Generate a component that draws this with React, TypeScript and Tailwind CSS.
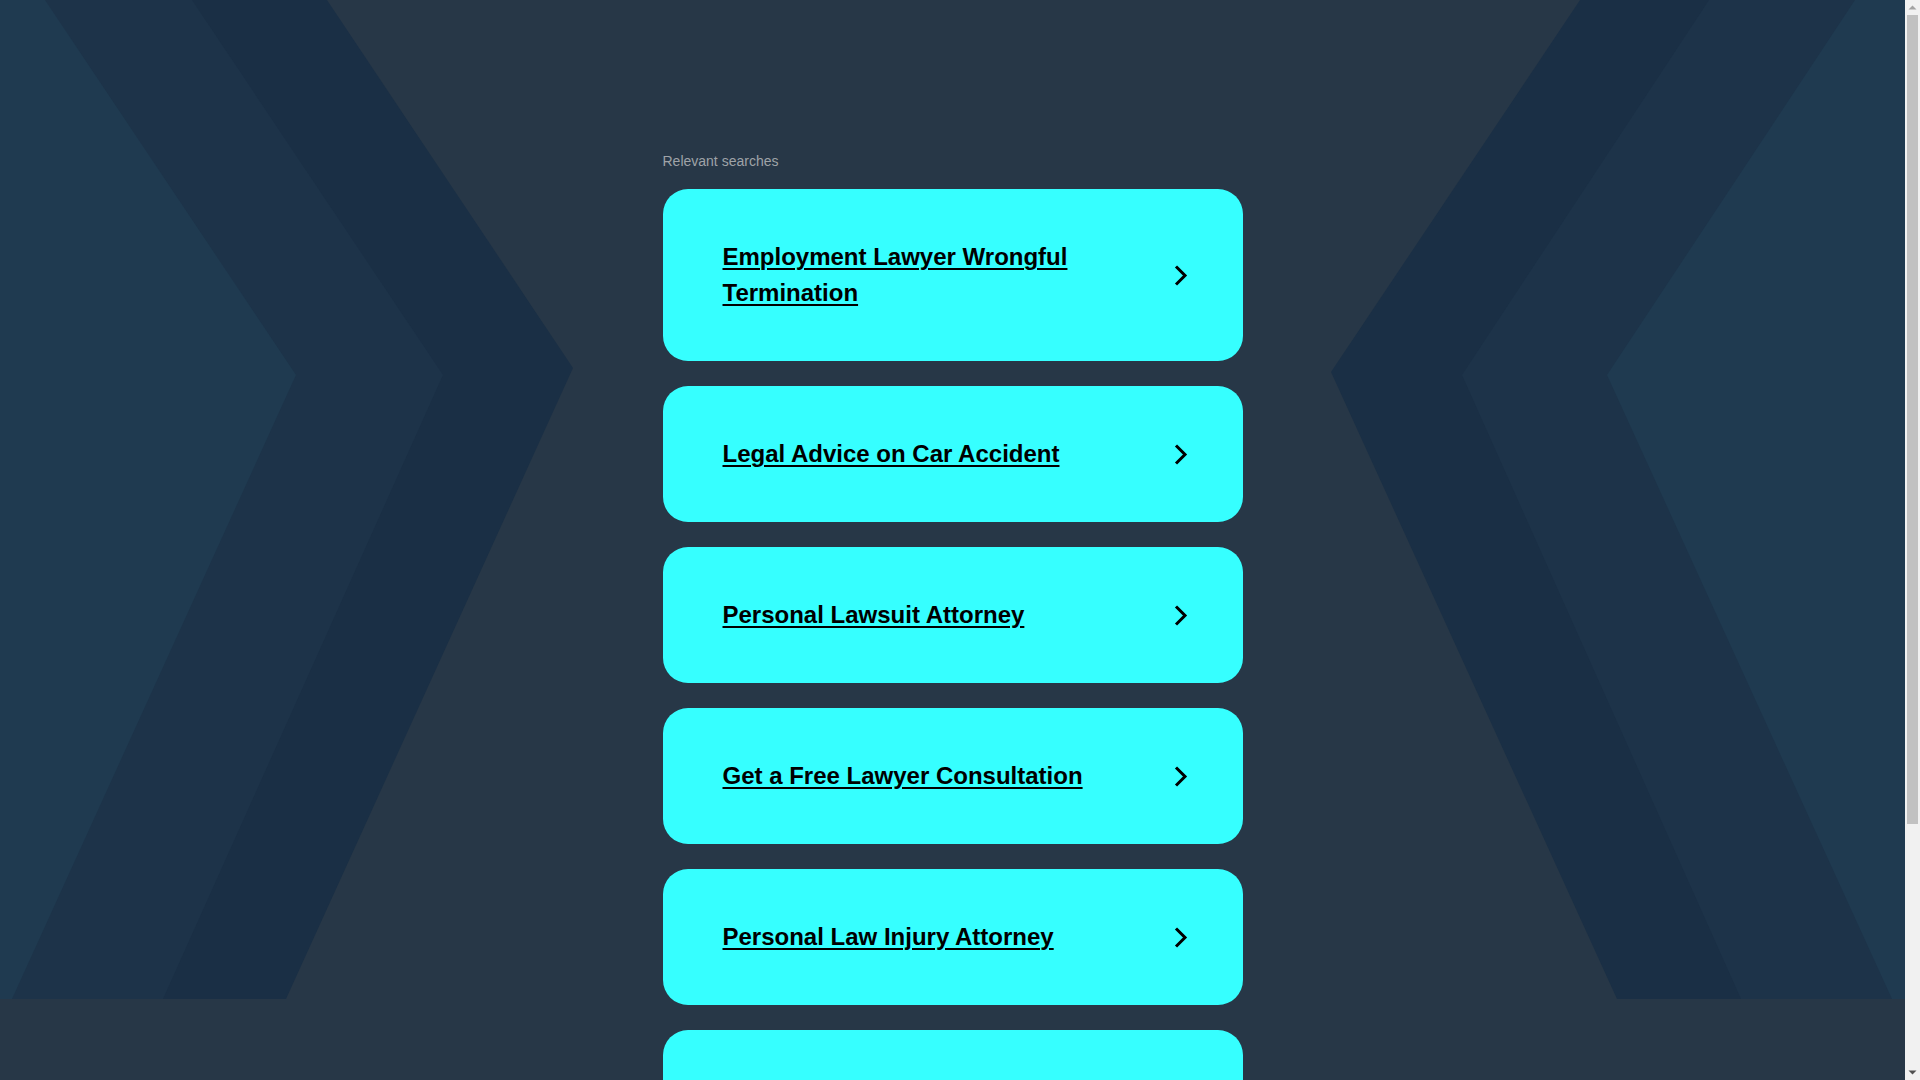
import React from "react";

const items = [
  "Employment Lawyer Wrongful Termination",
  "Legal Advice on Car Accident",
  "Personal Lawsuit Attorney",
  "Get a Free Lawyer Consultation",
  "Personal Law Injury Attorney",
  "Wrongful Termination Lawyer",
];

function Chevron() {
  return (
    <svg width="14" height="21" viewBox="0 0 14 21" fill="none" className="shrink-0">
      <path d="M2 1.5 L11 10.5 L2 19.5" stroke="#000" strokeWidth="3" strokeLinecap="butt" strokeLinejoin="miter" />
    </svg>
  );
}

function Background() {
  return (
    <svg
      className="absolute left-0 top-0 w-full h-[999px]"
      viewBox="0 0 1905 999"
      preserveAspectRatio="none"
      aria-hidden="true"
    >
      <polygon points="0,0 327,0 573,368 286,999 0,999" fill="#1a2f45" />
      <polygon points="0,0 192,0 443,375 163,999 0,999" fill="#1d3349" />
      <polygon points="0,0 45,0 296,375 12,999 0,999" fill="#1f3a50" />
      <polygon points="1905,0 1580,0 1331,372 1617,999 1905,999" fill="#1a2f45" />
      <polygon points="1905,0 1709,0 1462,375 1741,999 1905,999" fill="#1d3349" />
      <polygon points="1905,0 1855,0 1607,375 1892,999 1905,999" fill="#1f3a50" />
    </svg>
  );
}

function Scrollbar() {
  return (
    <div className="relative w-[15px] shrink-0 bg-[#f1f1f1]">
      <svg className="absolute left-0 top-0" width="15" height="15" viewBox="0 0 15 15">
        <polygon points="3.5,9.5 7.5,5.5 11.5,9.5" fill="#a3a3a3" />
      </svg>
      <div className="absolute left-[2px] top-[15px] h-[809px] w-[11px] bg-[#c1c1c1]" />
      <svg className="absolute left-0 bottom-0" width="15" height="15" viewBox="0 0 15 15">
        <polygon points="3.5,5.5 11.5,5.5 7.5,9.5" fill="#505050" />
      </svg>
    </div>
  );
}

export default function App() {
  return (
    <div className="flex h-screen overflow-hidden bg-[#273747] font-['Liberation_Sans',Arial,sans-serif]">
      <main className="relative flex-1 overflow-hidden">
        <Background />
        <div className="relative mx-auto w-[580px] pt-[151px] pb-[60px]">
          <div className="text-[14px] leading-[20px] text-[#9fa3a8] mb-[18px]">Relevant searches</div>
          <div className="flex flex-col gap-[25px]">
            {items.map((t) => (
              <a
                key={t}
                href="#"
                className="flex items-center justify-between gap-4 rounded-[25px] bg-[#36ffff] pl-[60px] pr-[55px] py-[50px]"
              >
                <span className="flex-1 text-[24px] leading-[36px] font-bold text-black underline decoration-2 underline-offset-[3px]">
                  {t}
                </span>
                <Chevron />
              </a>
            ))}
          </div>
        </div>
      </main>
      <Scrollbar />
    </div>
  );
}
